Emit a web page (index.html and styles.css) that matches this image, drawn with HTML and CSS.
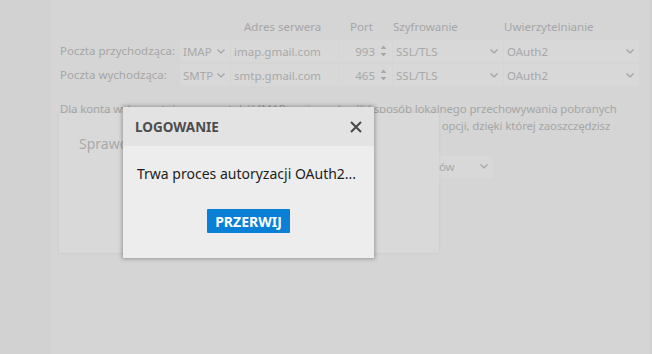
FILE: index.html
```html
<!DOCTYPE html>
<html lang="pl">

<head>
    <meta charset="UTF-8">
    <meta name="viewport" content="width=device-width, initial-scale=1.0">
    <title>Ustawienia serwera</title>
    <link rel="stylesheet" href="styles.css">
</head>

<body>
    <div class="app">
        <aside class="sidebar"></aside>

        <main class="settings">
            <div class="server-grid">
                <span></span>
                <span></span>
                <span class="col-head col-host">Adres serwera</span>
                <span class="col-head col-port">Port</span>
                <span class="col-head">Szyfrowanie</span>
                <span class="col-head">Uwierzytelnianie</span>

                <span class="row-label">Poczta przychodząca:</span>
                <div class="field select">IMAP <svg class="chev" viewBox="0 0 8 5"><path d="M0.5 0.5 L4 4 L7.5 0.5" /></svg></div>
                <div class="field">imap.gmail.com</div>
                <div class="field port">993 <svg class="spin" viewBox="0 0 7 12"><path d="M3.5 0.5 L6.5 4 H0.5 Z M3.5 11.5 L6.5 8 H0.5 Z" /></svg></div>
                <div class="field select">SSL/TLS <svg class="chev" viewBox="0 0 8 5"><path d="M0.5 0.5 L4 4 L7.5 0.5" /></svg></div>
                <div class="field select">OAuth2 <svg class="chev" viewBox="0 0 8 5"><path d="M0.5 0.5 L4 4 L7.5 0.5" /></svg></div>

                <span class="row-label">Poczta wychodząca:</span>
                <div class="field select">SMTP <svg class="chev" viewBox="0 0 8 5"><path d="M0.5 0.5 L4 4 L7.5 0.5" /></svg></div>
                <div class="field">smtp.gmail.com</div>
                <div class="field port">465 <svg class="spin" viewBox="0 0 7 12"><path d="M3.5 0.5 L6.5 4 H0.5 Z M3.5 11.5 L6.5 8 H0.5 Z" /></svg></div>
                <div class="field select">SSL/TLS <svg class="chev" viewBox="0 0 8 5"><path d="M0.5 0.5 L4 4 L7.5 0.5" /></svg></div>
                <div class="field select">OAuth2 <svg class="chev" viewBox="0 0 8 5"><path d="M0.5 0.5 L4 4 L7.5 0.5" /></svg></div>
            </div>

            <p class="note">
                Dla konta wykorzystującego protokół IMAP możesz określić sposób lokalnego przechowywania pobranych<br>
                wiadomości. Możesz na przykład skorzystać z jednej z wielu przydatnych opcji, dzięki której zaoszczędzisz<br>
                miejsce na dysku lub pozostawić kopie wiadomości jedynie na serwerze.
            </p>

            <div class="store-row">
                <span class="store-label">Pobieraj wiadomości:</span>
                <div class="field select store">Od wszystkich nadawców <svg class="chev" viewBox="0 0 8 5"><path d="M0.5 0.5 L4 4 L7.5 0.5" /></svg></div>
            </div>
        </main>
    </div>

    <!-- okno sprawdzania konfiguracji (pod spodem) -->
    <div class="check-box">
        <span class="check-title">Sprawdzanie konfiguracji</span>
    </div>

    <!-- okno logowania -->
    <div class="modal">
        <div class="modal-head">
            <span class="modal-title">LOGOWANIE</span>
            <svg class="close" viewBox="0 0 12 12"><path d="M1 1 L11 11 M11 1 L1 11" /></svg>
        </div>
        <div class="modal-body">
            <p class="modal-text">Trwa proces autoryzacji OAuth2...</p>
            <button class="btnAbort">PRZERWIJ</button>
        </div>
    </div>
</body>

</html>
```

FILE: styles.css
```css
body {
    margin: 0;
    height: 354px;
    overflow: hidden;
    background-color: #d2d2d2;
    font-family: "Noto Sans", "Open Sans", sans-serif;
}

.app {
    display: flex;
    height: 354px;
}

.sidebar {
    width: 50px;
}

.settings {
    flex: 1;
    margin-right: 3px;
    padding: 19px 0 0 10px;
    background-color: #d5d5d5;
}

.server-grid {
    display: grid;
    grid-template-columns: 119px 50px 107px 53px 110px 135px;
    grid-template-rows: 19px 22px 22px;
    column-gap: 1px;
    row-gap: 2px;
}

.col-head {
    font-size: 11.5px;
    line-height: 16px;
    color: #a6a6a6;
    white-space: nowrap;
}

.col-host {
    padding-left: 13px;
}

.col-port {
    padding-left: 11px;
}

.row-label {
    font-size: 11.5px;
    line-height: 22px;
    color: #a6a6a6;
    white-space: nowrap;
}

.field {
    display: flex;
    align-items: center;
    height: 22px;
    box-sizing: border-box;
    padding: 0 5px 0 3px;
    font-size: 11.5px;
    color: #a8a8a8;
    background-color: #d8d8d8;
    white-space: nowrap;
}

.select {
    justify-content: space-between;
}

.port {
    justify-content: flex-end;
    gap: 5px;
}

.chev {
    width: 8px;
    height: 5px;
    flex: none;
    fill: none;
    stroke: #a3a3a3;
    stroke-width: 1.2;
}

.spin {
    width: 7px;
    height: 12px;
    flex: none;
    fill: #a8a8a8;
}

.note {
    margin: 15px 0 0 0;
    font-size: 11.5px;
    line-height: 16.5px;
    letter-spacing: -0.14px;
    color: #a6a6a6;
    white-space: nowrap;
}

.store-row {
    display: flex;
    align-items: center;
    width: 433px;
    margin-top: 5px;
}

.store-label {
    font-size: 11.5px;
    color: #a6a6a6;
}

.store {
    width: 178px;
    margin-left: auto;
}

.check-box {
    position: absolute;
    left: 59px;
    top: 113px;
    width: 380px;
    height: 140px;
    box-sizing: border-box;
    padding: 19px 20px;
    background-color: #d9d9d9;
    box-shadow: 0 0 3px rgba(0, 0, 0, 0.06);
}

.check-title {
    font-size: 14px;
    color: #a9a9a9;
}

.modal {
    position: absolute;
    left: 123px;
    top: 107px;
    width: 251px;
    height: 151px;
    display: flex;
    flex-direction: column;
    background-color: #ededed;
    box-shadow: 0 0 4px 1px rgba(0, 0, 0, 0.3);
}

.modal-head {
    display: flex;
    justify-content: space-between;
    align-items: center;
    height: 39px;
    padding: 0 12px;
    background-color: #e3e3e3;
}

.modal-title {
    font-size: 13.5px;
    font-weight: bold;
    color: #4d4d4d;
}

.close {
    width: 12px;
    height: 12px;
    stroke: #474747;
    stroke-width: 2;
}

.modal-body {
    display: flex;
    flex-direction: column;
    align-items: center;
    padding-top: 18px;
}

.modal-text {
    align-self: flex-start;
    margin: 0 0 0 14px;
    font-size: 14px;
    line-height: 20px;
    color: #1e1e1e;
}

.btnAbort {
    margin-top: 25px;
    width: 83px;
    height: 24px;
    padding: 0;
    border: none;
    border-radius: 1px;
    background-color: #0a7fd6;
    color: #ffffff;
    font-family: "Noto Sans", "Open Sans", sans-serif;
    font-size: 14px;
    font-weight: bold;
}
```
